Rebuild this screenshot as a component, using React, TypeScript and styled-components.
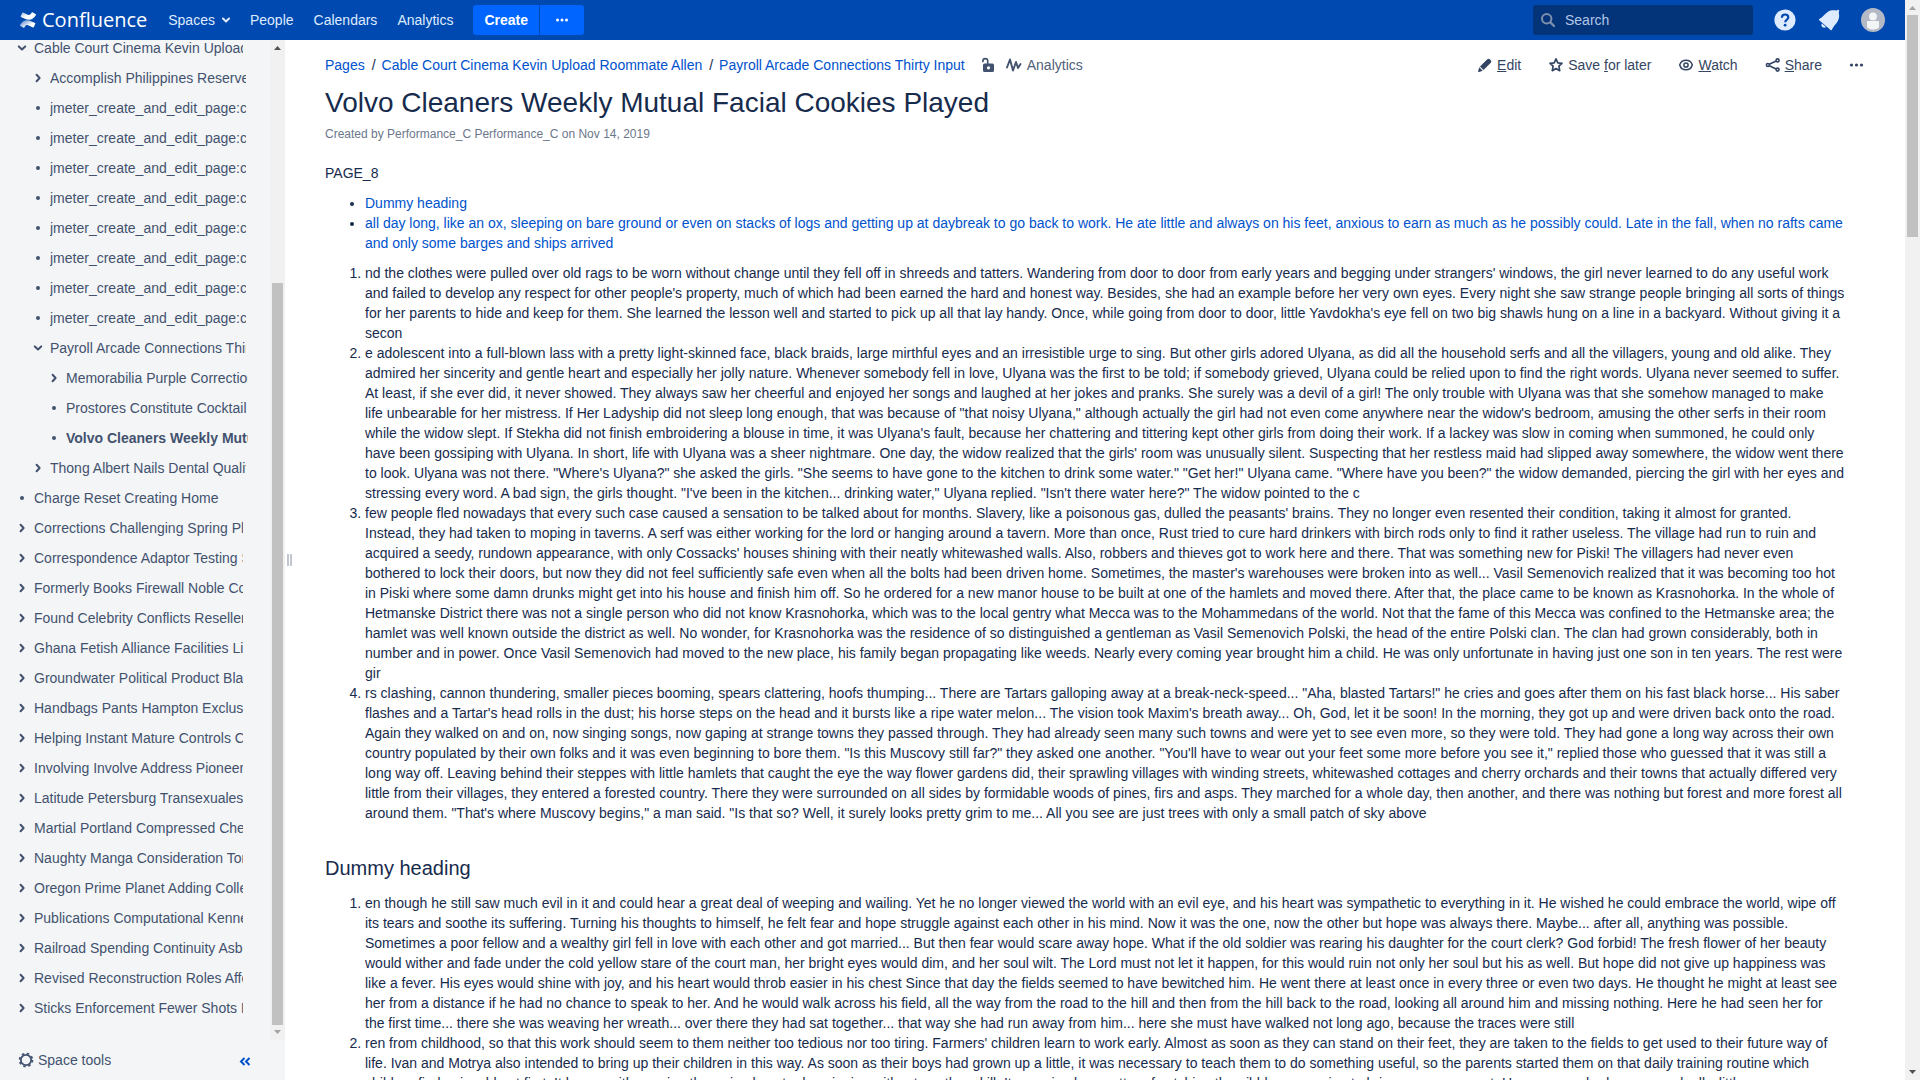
import React from "react";
import styled, { createGlobalStyle } from "styled-components";

const GlobalStyle = createGlobalStyle`
  *, *::before, *::after { box-sizing: border-box; }
  body {
    margin: 0;
    overflow: hidden;
    background: #fff;
    color: #172b4d;
    font: 14px/20px "Liberation Sans", Arial, sans-serif;
  }
  button, input { font: inherit; }
  a { color: #0052cc; text-decoration: none; }
`;

const Window = styled.div`
  display: flex;
  height: 100vh;
  overflow: hidden;
`;

const Page = styled.div`
  flex: 1;
  min-width: 0;
  display: flex;
  flex-direction: column;
`;

const Header = styled.header`
  flex: none;
  height: 40px;
  padding: 0 20px;
  display: flex;
  align-items: center;
  background: #0049b0;
`;

const Logo = styled.a`
  display: flex;
  align-items: center;
  gap: 6px;
  margin-right: 21px;
  color: #fff;
  font: 20px/30px "Open Sans", "Noto Sans", sans-serif;
`;

const Nav = styled.nav`
  display: flex;
  align-items: center;
  gap: 20px;
  margin-right: 20px;
`;

const NavLink = styled.a`
  display: flex;
  align-items: center;
  gap: 7px;
  color: #deebff;
`;

const ButtonGroup = styled.div`
  display: flex;
  gap: 1px;
`;

const HeaderButton = styled.button<{ $side: "left" | "right" }>`
  height: 30px;
  padding: 0 ${(p) => (p.$side === "left" ? 11 : 14)}px;
  display: flex;
  align-items: center;
  border: 0;
  border-radius: ${(p) => (p.$side === "left" ? "3px 0 0 3px" : "0 3px 3px 0")};
  background: #0065ff;
  color: #fff;
  font-weight: 700;
`;

const SearchBox = styled.label`
  width: 220px;
  height: 30px;
  margin-left: auto;
  margin-right: 20px;
  padding: 0 8px;
  display: flex;
  align-items: center;
  gap: 10px;
  border-radius: 3px;
  background: #03347a;
`;

const SearchInput = styled.input`
  min-width: 0;
  flex: 1;
  padding: 0;
  border: 0;
  outline: 0;
  background: transparent;
  color: #deebff;
  &::placeholder { color: #b2c6e6; opacity: 1; }
`;

const HeaderIcons = styled.div`
  display: flex;
  align-items: center;
  gap: 20px;
`;

const IconButton = styled.button`
  display: flex;
  align-items: center;
  justify-content: center;
  padding: 0;
  border: 0;
  background: none;
  color: inherit;
`;

const Body = styled.div`
  flex: 1;
  min-height: 0;
  display: flex;
`;

const Sidebar = styled.aside`
  flex: none;
  width: 285px;
  display: flex;
  flex-direction: column;
  background: #f4f5f7;
  color: #42526e;
`;

const SidebarScroll = styled.div`
  flex: 1;
  min-height: 0;
  display: flex;
`;

const TreeViewport = styled.div`
  flex: 1;
  min-width: 0;
  overflow: hidden;
`;

const Tree = styled.ul`
  margin: -7px 0 0;
  padding: 0;
  list-style: none;
`;

const TreeItem = styled.li<{ $level: number }>`
  height: 30px;
  padding-left: ${(p) => 14 + p.$level * 16}px;
  padding-right: ${(p) => [27, 24, 22][p.$level]}px;
  display: flex;
  align-items: center;
  gap: 4px;
`;

const TreeLink = styled.a<{ $current?: boolean }>`
  flex: 1;
  min-width: 0;
  overflow: hidden;
  white-space: nowrap;
  color: #42526e;
  font-weight: ${(p) => (p.$current ? 700 : 400)};
`;

const Marker = styled.svg`
  flex: none;
  width: 16px;
  height: 16px;
`;

const SidebarFooter = styled.div`
  flex: none;
  height: 40px;
  padding: 0 32px 0 18px;
  display: flex;
  align-items: center;
  justify-content: space-between;
  color: #42526e;
`;

const SpaceTools = styled(IconButton)`
  gap: 4px;
`;

const Splitter = styled.div`
  flex: none;
  width: 8px;
  padding-left: 2px;
  display: flex;
  align-items: center;
  gap: 1px;
  &::before, &::after {
    content: "";
    width: 2px;
    height: 12px;
    background: #c1c7d0;
  }
`;

const Main = styled.main`
  flex: 1;
  min-width: 0;
  overflow: hidden;
  padding: 15px 40px 0 32px;
`;

const TopRow = styled.div`
  display: flex;
  align-items: center;
  justify-content: space-between;
`;

const Breadcrumbs = styled.ol`
  display: flex;
  align-items: center;
  margin: 0;
  padding: 0;
  list-style: none;
`;

const Crumb = styled.li`
  & + &::before {
    content: "/";
    padding: 0 6px 0 7px;
  }
`;

const MetaItems = styled.li`
  display: flex;
  align-items: center;
  gap: 10px;
  margin-left: 15px;
  color: #42526e;
`;

const Analytics = styled.a`
  display: flex;
  align-items: center;
  gap: 5px;
  color: #505f79;
`;

const Actions = styled.div`
  display: flex;
  align-items: center;
  gap: 27px;
  color: #344563;
`;

const Action = styled(IconButton)`
  height: 20px;
  gap: 4px;
`;

const Title = styled.h1`
  margin: 12px 0 0;
  font-size: 28px;
  line-height: 32px;
  font-weight: 400;
`;

const Byline = styled.p`
  margin: 5px 0 19px;
  font-size: 12px;
  line-height: 20px;
  color: #6b778c;
`;

const Article = styled.article`
  padding-right: 20px;
  p { margin: 0; }
  ul, ol { margin: 10px 0 0; padding-left: 40px; }
  h2 {
    margin: 30px 0 0;
    font-size: 20px;
    line-height: 30px;
    font-weight: 400;
  }
`;

const ScrollTrack = styled.div`
  flex: none;
  width: 15px;
  display: flex;
  flex-direction: column;
  align-items: center;
  background: #f1f1f1;
`;

const ScrollArrow = styled.svg`
  flex: none;
  width: 15px;
  height: 15px;
`;

const ScrollThumb = styled.div<{ $before: number; $size: number; $after: number }>`
  flex: 1;
  width: 11px;
  display: grid;
  grid-template-rows: ${(p) => `${p.$before}fr ${p.$size}fr ${p.$after}fr`};
  &::before {
    content: "";
    grid-row: 2;
    background: #c1c1c1;
  }
`;

function Scrollbar(props: { before: number; size: number; after: number; up: string; down: string }) {
  return (
    <ScrollTrack aria-hidden="true">
      <ScrollArrow viewBox="0 0 15 15"><path d="M4 10 7.5 6 11 10z" fill={props.up} /></ScrollArrow>
      <ScrollThumb $before={props.before} $size={props.size} $after={props.after} />
      <ScrollArrow viewBox="0 0 15 15"><path d="M4 5 7.5 9 11 5z" fill={props.down} /></ScrollArrow>
    </ScrollTrack>
  );
}

type Kind = "open" | "closed" | "leaf";

const markerPath: Record<Kind, React.ReactNode> = {
  open: <path d="M4.8 6.4 8 9.4l3.200-3" fill="none" stroke="currentColor" strokeWidth="2" strokeLinecap="round" strokeLinejoin="round" />,
  closed: <path d="M6.600 4.800 9.600 8l-3 3.200" fill="none" stroke="currentColor" strokeWidth="2" strokeLinecap="round" strokeLinejoin="round" />,
  leaf: <circle cx="8" cy="8" r="2" fill="currentColor" />,
};

const jmeter: [number, Kind, string][] = Array.from({ length: 8 }, () => [1, "leaf", "jmeter_create_and_edit_page:create"]);

const tree: [number, Kind, string][] = [
  [0, "open", "Cable Court Cinema Kevin Upload Roommate Allen"],
  [1, "closed", "Accomplish Philippines Reserve"],
  ...jmeter,
  [1, "open", "Payroll Arcade Connections Thirty Input"],
  [2, "closed", "Memorabilia Purple Corrections"],
  [2, "leaf", "Prostores Constitute Cocktail"],
  [2, "leaf", "Volvo Cleaners Weekly Mutual Facial Cookies Played"],
  [1, "closed", "Thong Albert Nails Dental Quality"],
  [0, "leaf", "Charge Reset Creating Home"],
  [0, "closed", "Corrections Challenging Spring Place"],
  [0, "closed", "Correspondence Adaptor Testing Series"],
  [0, "closed", "Formerly Books Firewall Noble Court"],
  [0, "closed", "Found Celebrity Conflicts Reseller"],
  [0, "closed", "Ghana Fetish Alliance Facilities List"],
  [0, "closed", "Groundwater Political Product Black"],
  [0, "closed", "Handbags Pants Hampton Exclusive"],
  [0, "closed", "Helping Instant Mature Controls Court"],
  [0, "closed", "Involving Involve Address Pioneer"],
  [0, "closed", "Latitude Petersburg Transexuales"],
  [0, "closed", "Martial Portland Compressed Chess"],
  [0, "closed", "Naughty Manga Consideration Toronto"],
  [0, "closed", "Oregon Prime Planet Adding College"],
  [0, "closed", "Publications Computational Kennedy"],
  [0, "closed", "Railroad Spending Continuity Asbestos"],
  [0, "closed", "Revised Reconstruction Roles Affect"],
  [0, "closed", "Sticks Enforcement Fewer Shots Place"],
];

const first = [
  `nd the clothes were pulled over old rags to be worn without change until they fell off in shreeds and tatters. Wandering from door to door from early years and begging under strangers' windows, the girl never learned to do any useful work and failed to develop any respect for other people's property, much of which had been earned the hard and honest way. Besides, she had an example before her very own eyes. Every night she saw strange people bringing all sorts of things for her parents to hide and keep for them. She learned the lesson well and started to pick up all that lay handy. Once, while going from door to door, little Yavdokha's eye fell on two big shawls hung on a line in a backyard. Without giving it a secon`,
  `e adolescent into a full-blown lass with a pretty light-skinned face, black braids, large mirthful eyes and an irresistible urge to sing. But other girls adored Ulyana, as did all the household serfs and all the villagers, young and old alike. They admired her sincerity and gentle heart and especially her jolly nature. Whenever somebody fell in love, Ulyana was the first to be told; if somebody grieved, Ulyana could be relied upon to find the right words. Ulyana never seemed to suffer. At least, if she ever did, it never showed. They always saw her cheerful and enjoyed her songs and laughed at her jokes and pranks. She surely was a devil of a girl! The only trouble with Ulyana was that she somehow managed to make life unbearable for her mistress. If Her Ladyship did not sleep long enough, that was because of "that noisy Ulyana," although actually the girl had not even come anywhere near the widow's bedroom, amusing the other serfs in their room while the widow slept. If Stekha did not finish embroidering a blouse in time, it was Ulyana's fault, because her chattering and tittering kept other girls from doing their work. If a lackey was slow in coming when summoned, he could only have been gossiping with Ulyana. In short, life with Ulyana was a sheer nightmare. One day, the widow realized that the girls' room was unusually silent. Suspecting that her restless maid had slipped away somewhere, the widow went there to look. Ulyana was not there. "Where's Ulyana?" she asked the girls. "She seems to have gone to the kitchen to drink some water." "Get her!" Ulyana came. "Where have you been?" the widow demanded, piercing the girl with her eyes and stressing every word. A bad sign, the girls thought. "I've been in the kitchen... drinking water," Ulyana replied. "Isn't there water here?" The widow pointed to the c`,
  `few people fled nowadays that every such case caused a sensation to be talked about for months. Slavery, like a poisonous gas, dulled the peasants' brains. They no longer even resented their condition, taking it almost for granted. Instead, they had taken to moping in taverns. A serf was either working for the lord or hanging around a tavern. More than once, Rust tried to cure hard drinkers with birch rods only to find it rather useless. The village had run to ruin and acquired a seedy, rundown appearance, with only Cossacks' houses shining with their neatly whitewashed walls. Also, robbers and thieves got to work here and there. That was something new for Piski! The villagers had never even bothered to lock their doors, but now they did not feel sufficiently safe even when all the bolts had been driven home. Sometimes, the master's warehouses were broken into as well... Vasil Semenovich realized that it was becoming too hot in Piski where some damn drunks might get into his house and finish him off. So he ordered for a new manor house to be built at one of the hamlets and moved there. After that, the place came to be known as Krasnohorka. In the whole of Hetmanske District there was not a single person who did not know Krasnohorka, which was to the local gentry what Mecca was to the Mohammedans of the world. Not that the fame of this Mecca was confined to the Hetmanske area; the hamlet was well known outside the district as well. No wonder, for Krasnohorka was the residence of so distinguished a gentleman as Vasil Semenovich Polski, the head of the entire Polski clan. The clan had grown considerably, both in number and in power. Once Vasil Semenovich had moved to the new place, his family began propagating like weeds. Nearly every coming year brought him a child. He was only unfortunate in having just one son in ten years. The rest were gir`,
  `rs clashing, cannon thundering, smaller pieces booming, spears clattering, hoofs thumping... There are Tartars galloping away at a break-neck-speed... "Aha, blasted Tartars!" he cries and goes after them on his fast black horse... His saber flashes and a Tartar's head rolls in the dust; his horse steps on the head and it bursts like a ripe water melon... The vision took Maxim's breath away... Oh, God, let it be soon! In the morning, they got up and were driven back onto the road. Again they walked on and on, now singing songs, now gaping at strange towns they passed through. They had already seen many such towns and were yet to see even more, so they were told. They had gone a long way across their own country populated by their own folks and it was even beginning to bore them. "Is this Muscovy still far?" they asked one another. "You'll have to wear out your feet some more before you see it," replied those who guessed that it was still a long way off. Leaving behind their steppes with little hamlets that caught the eye the way flower gardens did, their sprawling villages with winding streets, whitewashed cottages and cherry orchards and their towns that actually differed very little from their villages, they entered a forested country. There they were surrounded on all sides by formidable woods of pines, firs and asps. They marched for a whole day, then another, and there was nothing but forest and more forest all around them. "That's where Muscovy begins," a man said. "Is that so? Well, it surely looks pretty grim to me... All you see are just trees with only a small patch of sky above`,
];

const second = [
  `en though he still saw much evil in it and could hear a great deal of weeping and wailing. Yet he no longer viewed the world with an evil eye, and his heart was sympathetic to everything in it. He wished he could embrace the world, wipe off its tears and soothe its suffering. Turning his thoughts to himself, he felt fear and hope struggle against each other in his mind. Now it was the one, now the other but hope was always there. Maybe... after all, anything was possible. Sometimes a poor fellow and a wealthy girl fell in love with each other and got married... But then fear would scare away hope. What if the old soldier was rearing his daughter for the court clerk? God forbid! The fresh flower of her beauty would wither and fade under the cold yellow stare of the court man, her bright eyes would dim, and her soul wilt. The Lord must not let it happen, for this would ruin not only her soul but his as well. But hope did not give up happiness was like a fever. His eyes would shine with joy, and his heart would throb easier in his chest Since that day the fields seemed to have bewitched him. He went there at least once in every three or even two days. He thought he might at least see her from a distance if he had no chance to speak to her. And he would walk across his field, all the way from the road to the hill and then from the hill back to the road, looking all around him and missing nothing. Here he had seen her for the first time... there she was weaving her wreath... over there they had sat together... that way she had run away from him... here she must have walked not long ago, because the traces were still`,
  `ren from childhood, so that this work should seem to them neither too tedious nor too tiring. Farmers' children learn to work early. Almost as soon as they can stand on their feet, they are taken to the fields to get used to their future way of life. Ivan and Motrya also intended to bring up their children in this way. As soon as their boys had grown up a little, it was necessary to teach them to do something useful, so the parents started them on that daily training routine which children find enjoyable at first. It began with passing the swine how to do spinning without another skill. It was simply a matter of catching the nibble, now going to bring a new garment. However, we had grown gradually, little`,
];

export default function App() {
  return (
    <>
      <GlobalStyle />
      <Window>
        <Page>
          <Header>
            <Logo href="#" aria-label="Confluence">
              <svg width="16" height="16" viewBox="0 0 24 24">
                <defs>
                  <linearGradient id="lower" x1="1" y1="1" x2="0.2" y2="0.3">
                    <stop offset="0" stopColor="#fff" />
                    <stop offset="0.45" stopColor="#fff" />
                    <stop offset="1" stopColor="#fff" stopOpacity="0.55" />
                  </linearGradient>
                  <linearGradient id="upper" x1="0" y1="0" x2="0.8" y2="0.7">
                    <stop offset="0" stopColor="#fff" stopOpacity="0.6" />
                    <stop offset="0.6" stopColor="#fff" />
                  </linearGradient>
                </defs>
                <path fill="url(#lower)" d="M.87 18.257c-.248.382-.53.875-.763 1.245a.764.764 0 0 0 .255 1.04l4.965 3.054a.764.764 0 0 0 1.058-.26c.199-.332.454-.763.733-1.221 1.967-3.247 3.945-2.853 7.508-1.146l4.957 2.337a.764.764 0 0 0 1.028-.382l2.364-5.346a.764.764 0 0 0-.382-1 599.851 599.851 0 0 1-4.965-2.361C10.911 10.97 5.224 11.185.87 18.257z" />
                <path fill="url(#upper)" d="M23.131 5.743c.249-.405.531-.875.764-1.25a.764.764 0 0 0-.256-1.034L18.675.404a.764.764 0 0 0-1.058.26c-.195.335-.451.763-.734 1.225-1.966 3.246-3.945 2.85-7.508 1.146L4.437.694a.764.764 0 0 0-1.027.382L1.046 6.422a.764.764 0 0 0 .382 1c1.039.49 3.105 1.467 4.965 2.361 6.698 3.246 12.392 3.029 16.738-4.04z" />
              </svg>
              Confluence
            </Logo>
            <Nav>
              <NavLink href="#">
                Spaces
                <svg width="8" height="8" viewBox="0 0 8 8"><path d="M1 2.500 4 5.500l3-3" fill="none" stroke="currentColor" strokeWidth="2" strokeLinecap="round" strokeLinejoin="round" /></svg>
              </NavLink>
              <NavLink href="#">People</NavLink>
              <NavLink href="#">Calendars</NavLink>
              <NavLink href="#">Analytics</NavLink>
            </Nav>
            <ButtonGroup>
              <HeaderButton $side="left">Create</HeaderButton>
              <HeaderButton $side="right" aria-label="Create from template">
                <svg width="16" height="16" viewBox="0 0 16 16" fill="currentColor"><circle cx="3.500" cy="8" r="1.500" /><circle cx="8" cy="8" r="1.500" /><circle cx="12.500" cy="8" r="1.500" /></svg>
              </HeaderButton>
            </ButtonGroup>
            <SearchBox>
              <svg width="14" height="14" viewBox="0 0 14 14" fill="none" stroke="#7d8eaa" strokeWidth="2" strokeLinecap="round"><circle cx="5.700" cy="5.700" r="4.700" /><path d="m9.500 9.500 3.500 3.500" strokeWidth="2.400" /></svg>
              <SearchInput type="text" placeholder="Search" aria-label="Search" />
            </SearchBox>
            <HeaderIcons>
              <IconButton aria-label="Help">
                <svg width="24" height="24" viewBox="0 0 24 24"><circle cx="12" cy="12" r="10.600" fill="#deebff" /><path d="M8.900 9.700c0-2 1.300-3.200 3.200-3.200s3.200 1.200 3.200 2.900c0 2.300-3.100 2.300-3.100 4.900" fill="none" stroke="#0049b0" strokeWidth="2.200" /><circle cx="12.100" cy="17.200" r="1.400" fill="#0049b0" /></svg>
              </IconButton>
              <IconButton aria-label="Notifications">
                <svg width="24" height="24" viewBox="0 0 24 24" fill="#deebff"><path d="M2.300 11.100C5.500 9.300 8 5.800 11 3.800c2.600-1.700 5.600-1.700 8.400-1.200l1.300-.7c.8-.3 1.700.5 1.400 1.300l-.4 1.300c.8 2.900.6 6-1 8.700-1.700 3-4.800 5.500-5.900 8.700-.2.500-.8.600-1.200.2L2.200 12.200c-.4-.4-.3-.9.100-1.100z" /><path d="M5 15.400 9 19c-1 .9-2.600.9-3.700-.1s-1.200-2.500-.3-3.500z" /></svg>
              </IconButton>
              <IconButton aria-label="User menu">
                <svg width="24" height="24" viewBox="0 0 24 24"><circle cx="12" cy="12" r="12" fill="#b3bac5" /><circle cx="12" cy="8.400" r="3.900" fill="#f4f5f7" /><path d="M7 13h10a1 1 0 0 1 1 1v4.500c0 1.800-2.600 3-6 3s-6-1.200-6-3V14a1 1 0 0 1 1-1z" fill="#f4f5f7" /></svg>
              </IconButton>
            </HeaderIcons>
          </Header>
          <Body>
            <Sidebar>
              <SidebarScroll>
                <TreeViewport>
                  <Tree>
                    {tree.map(([level, kind, label], i) => (
                      <TreeItem key={i} $level={level}>
                        <Marker viewBox="0 0 16 16">{markerPath[kind]}</Marker>
                        <TreeLink href="#" $current={label.startsWith("Volvo")}>{label}</TreeLink>
                      </TreeItem>
                    ))}
                  </Tree>
                </TreeViewport>
                <Scrollbar before={228} size={742} after={0} up="#505050" down="#a3a3a3" />
              </SidebarScroll>
              <SidebarFooter>
                <SpaceTools>
                  <svg width="16" height="16" viewBox="0 0 16 16" fill="none" stroke="currentColor"><circle cx="8" cy="8" r="5.200" strokeWidth="1.800" /><circle cx="8" cy="8" r="6.500" strokeWidth="1.600" strokeDasharray="2.550 2.550" /></svg>
                  Space tools
                </SpaceTools>
                <IconButton aria-label="Collapse sidebar">
                  <svg width="16" height="16" viewBox="0 0 16 16" fill="none" stroke="#0052cc" strokeWidth="2"><path d="M7.500 6 4 9.500 7.500 13M12.500 6 9 9.500l3.500 3.500" /></svg>
                </IconButton>
              </SidebarFooter>
            </Sidebar>
            <Splitter />
            <Main>
              <TopRow>
                <Breadcrumbs>
                  <Crumb><a href="#">Pages</a></Crumb>
                  <Crumb><a href="#">Cable Court Cinema Kevin Upload Roommate Allen</a></Crumb>
                  <Crumb><a href="#">Payroll Arcade Connections Thirty Input</a></Crumb>
                  <MetaItems>
                    <IconButton aria-label="Unrestricted">
                      <svg width="16" height="16" viewBox="0 0 16 16"><path d="M2.900 5.200V4a2.400 2.400 0 0 1 4.800 0v3" fill="none" stroke="currentColor" strokeWidth="1.600" /><path fill="currentColor" fillRule="evenodd" d="M4.500 6.500h8a1.500 1.500 0 0 1 1.500 1.500v5.500a1.500 1.500 0 0 1-1.500 1.500h-8A1.500 1.500 0 0 1 3 13.500V8a1.500 1.500 0 0 1 1.500-1.500zm4 2.700a1.600 1.600 0 1 0 0 3.200 1.600 1.600 0 0 0 0-3.200z" /></svg>
                    </IconButton>
                    <Analytics href="#">
                      <svg width="16" height="16" viewBox="0 0 16 16" fill="none" stroke="#42526e" strokeWidth="1.900" strokeLinecap="round" strokeLinejoin="round"><path d="M1 10.500 4 2.500l3 11 3-8.500 2 6 2.500-4" /></svg>
                      Analytics
                    </Analytics>
                  </MetaItems>
                </Breadcrumbs>
                <Actions>
                  <Action>
                    <svg width="16" height="16" viewBox="0 0 16 16" fill="currentColor"><path d="M10.300 2.300a1.800 1.800 0 0 1 2.500 0l1 1a1.800 1.800 0 0 1 0 2.500L6.500 13 3 9.500zM2.300 10.300l3.400 3.400-3.600 1.200a.8.800 0 0 1-1-1z" /></svg>
                    <span><u>E</u>dit</span>
                  </Action>
                  <Action>
                    <svg width="16" height="16" viewBox="0 0 16 16" fill="none" stroke="currentColor" strokeWidth="1.700" strokeLinejoin="round"><path d="m8 1.900 1.800 3.900 4.200.5-3.100 2.900.8 4.500L8 11.600l-3.700 2.100.8-4.500L2 6.300l4.200-.5z" /></svg>
                    <span>Save <u>f</u>or later</span>
                  </Action>
                  <Action>
                    <svg width="16" height="16" viewBox="0 0 16 16" fill="none" stroke="currentColor" strokeWidth="1.500"><path d="M1.700 8C2.600 5 5 3.300 8 3.300S13.400 5 14.300 8c-.9 3-3.300 4.700-6.300 4.700S2.600 11 1.700 8z" /><circle cx="8" cy="8" r="2.100" /></svg>
                    <span><u>W</u>atch</span>
                  </Action>
                  <Action>
                    <svg width="16" height="16" viewBox="0 0 16 16" fill="none" stroke="currentColor" strokeWidth="1.600"><circle cx="2.900" cy="8" r="1.500" /><circle cx="12.600" cy="3.400" r="1.500" /><circle cx="12.600" cy="12.600" r="1.500" /><path d="m4.300 7.300 6.900-3.200M4.300 8.700l6.900 3.200" /></svg>
                    <span><u>S</u>hare</span>
                  </Action>
                  <Action aria-label="More actions">
                    <svg width="16" height="16" viewBox="0 0 16 16" fill="currentColor"><circle cx="2.500" cy="8" r="1.600" /><circle cx="7.500" cy="8" r="1.600" /><circle cx="12.500" cy="8" r="1.600" /></svg>
                  </Action>
                </Actions>
              </TopRow>
              <Title>Volvo Cleaners Weekly Mutual Facial Cookies Played</Title>
              <Byline>Created by Performance_C Performance_C on Nov 14, 2019</Byline>
              <Article>
                <p>PAGE_8</p>
                <ul>
                  <li><a href="#">Dummy heading</a></li>
                  <li><a href="#">all day long, like an ox, sleeping on bare ground or even on stacks of logs and getting up at daybreak to go back to work. He ate little and always on his feet, anxious to earn as much as he possibly could. Late in the fall, when no rafts came and only some barges and ships arrived</a></li>
                </ul>
                <ol>{first.map((text) => <li key={text}>{text}</li>)}</ol>
                <h2>Dummy heading</h2>
                <ol>{second.map((text) => <li key={text}>{text}</li>)}</ol>
              </Article>
            </Main>
          </Body>
        </Page>
        <Scrollbar before={0} size={222} after={828} up="#a3a3a3" down="#505050" />
      </Window>
    </>
  );
}
